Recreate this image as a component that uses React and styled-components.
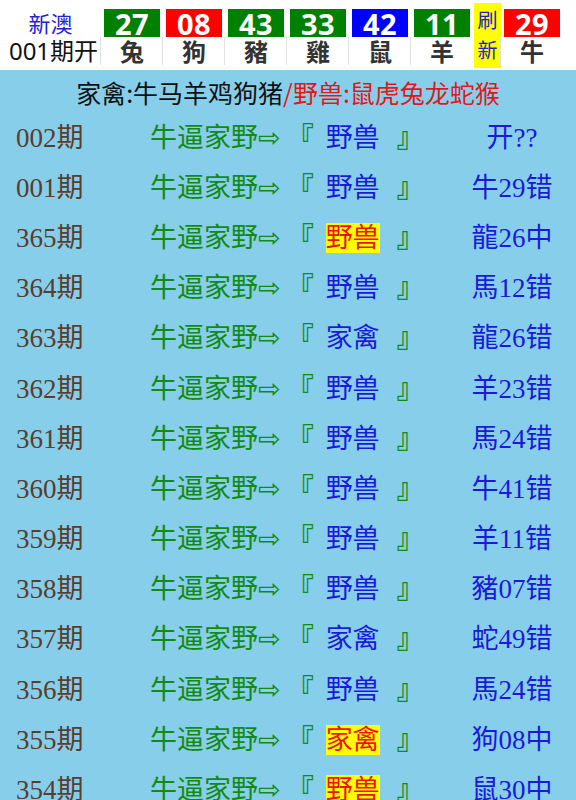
import React from 'react';
import styled, { createGlobalStyle } from 'styled-components';

const GlobalStyle = createGlobalStyle`
  html, body {
    margin: 0;
    padding: 0;
    background: #87ceeb;
  }
`;

// Header (latest draw)
const Header = styled.div`
  display: flex;
  align-items: stretch;
  height: 70px;
  background: #fff;
  font-family: 'Noto Sans', 'Noto Sans CJK SC', sans-serif;
`;

const TitleCell = styled.div`
  width: 101px;
  display: flex;
  flex-direction: column;
  align-items: center;
  white-space: nowrap;
`;

const Brand = styled.div`
  margin-top: 9px;
  height: 28px;
  line-height: 28px;
  font-size: 22px;
  color: #2424cc;
`;

const Issue = styled.div`
  height: 28px;
  line-height: 28px;
  font-size: 24px;
  color: #111;
  padding-left: 6px;
`;

const BallCell = styled.div`
  width: 56px;
  padding: 9px 3px 0;
  display: flex;
  flex-direction: column;
`;

const NumBox = styled.div`
  height: 28px;
  line-height: 29px;
  background: ${p => p.color};
  color: #fff;
  font-size: 29px;
  font-weight: bold;
  text-align: center;
  letter-spacing: 0.5px;
`;

const Zodiac = styled.div`
  margin: 0 -3px 0 -4px;
  height: 28px;
  line-height: 29px;
  font-size: 24px;
  font-weight: bold;
  color: #333;
  text-align: center;
  border-left: 1px solid #e2e2e2;
`;

const Refresh = styled.div`
  width: 27px;
  margin: 3px 0 2px 1px;
  background: #ffff00;
  color: #2222cc;
  font-size: 20px;
  line-height: 30px;
  text-align: center;
  display: flex;
  flex-direction: column;
  justify-content: center;
`;

// Legend + history rows
const Legend = styled.div`
  height: 40px;
  text-align: center;
  font-family: 'Noto Sans CJK SC', sans-serif;
  font-size: 25px;
  line-height: 44px;
  color: #111;
  white-space: nowrap;
`;

const Red = styled.span`
  color: #e01818;
`;

const Row = styled.div`
  display: grid;
  grid-template-columns: 150px 300px 1fr;
  height: 50.2px;
  align-items: center;
  font-family: 'Liberation Serif', 'DejaVu Sans', 'Noto Sans CJK SC', serif;
  font-size: 27px;
  white-space: nowrap;
`;

const Period = styled.div`
  padding-left: 16px;
  color: #5a3d2b;
`;

const Pick = styled.div`
  color: #138a13;
`;

const Arrow = styled.span`
  font-family: 'DejaVu Sans', sans-serif;
  font-size: 27px;
`;

const Bracket = styled.span`
  font-weight: bold;
  margin-left: ${p => p.shift || 0}px;
`;

const Group = styled.span`
  margin: 0 17px 0 12px;
  color: ${p => (p.hit ? '#ee1111' : '#1a1ad8')};
  background: ${p => (p.hit ? '#ffff00' : 'transparent')};
`;

const Result = styled.div`
  text-align: center;
  color: #1a1ad8;
  padding-right: 2px;
`;

const BALLS = [
  { n: '27', c: '#008000', z: '兔' },
  { n: '08', c: '#ff0000', z: '狗' },
  { n: '43', c: '#008000', z: '豬' },
  { n: '33', c: '#008000', z: '雞' },
  { n: '42', c: '#0000ff', z: '鼠' },
  { n: '11', c: '#008000', z: '羊' },
];

const ROWS = [
  ['002', '野兽', '开??'],
  ['001', '野兽', '牛29错'],
  ['365', '野兽', '龍26中'],
  ['364', '野兽', '馬12错'],
  ['363', '家禽', '龍26错'],
  ['362', '野兽', '羊23错'],
  ['361', '野兽', '馬24错'],
  ['360', '野兽', '牛41错'],
  ['359', '野兽', '羊11错'],
  ['358', '野兽', '豬07错'],
  ['357', '家禽', '蛇49错'],
  ['356', '野兽', '馬24错'],
  ['355', '家禽', '狗08中'],
  ['354', '野兽', '鼠30中'],
];

const App = () => (
  <>
    <GlobalStyle />
    <Header>
      <TitleCell>
        <Brand>新澳</Brand>
        <Issue>001期开</Issue>
      </TitleCell>
      {BALLS.map(b => (
        <BallCell key={b.n}>
          <NumBox color={b.c}>{b.n}</NumBox>
          <Zodiac>{b.z}</Zodiac>
        </BallCell>
      ))}
      <Refresh>
        <span>刷</span>
        <span>新</span>
      </Refresh>
      <BallCell>
        <NumBox color="#ff0000">29</NumBox>
        <Zodiac>牛</Zodiac>
      </BallCell>
    </Header>

    <Legend>
      家禽:牛马羊鸡狗猪<Red>/野兽:鼠虎兔龙蛇猴</Red>
    </Legend>

    {ROWS.map(([p, g, r]) => (
      <Row key={p}>
        <Period>{p}期</Period>
        <Pick>
          牛逼家野<Arrow>⇨</Arrow>
          <Bracket shift={6}>『</Bracket>
          <Group hit={r.endsWith('中')}>{g}</Group>
          <Bracket>』</Bracket>
        </Pick>
        <Result>{r}</Result>
      </Row>
    ))}
  </>
);

export default App;
